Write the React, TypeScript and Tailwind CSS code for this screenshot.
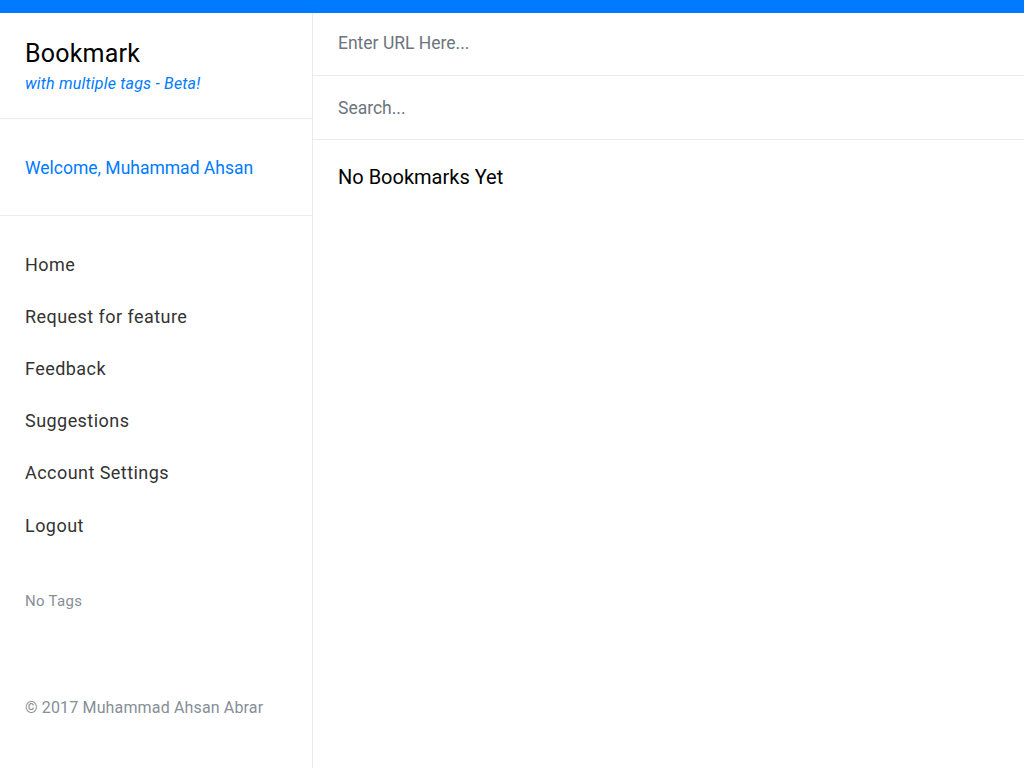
import React from "react";

export default function App() {
  const nav = ["Home", "Request for feature", "Feedback", "Suggestions", "Account Settings", "Logout"];
  return (
    <div className="min-h-[768px] bg-white flex flex-col" style={{ fontFamily: "Roboto, 'Liberation Sans', sans-serif" }}>
      <div className="h-[13px] bg-[#007bff]" />
      <div className="flex flex-1">
        <aside className="w-[313px] border-r border-[#e9ecef] flex flex-col">
          <div className="h-[106px] border-b border-[#e9ecef] pl-[25px] pt-[26px]">
            <div className="text-[25px] leading-[30px] tracking-[0.2px] text-black">Bookmark</div>
            <div className="text-[16px] leading-[20px] italic tracking-[0.2px] text-[#007bff] mt-[5px]">with multiple tags - Beta!</div>
          </div>
          <div className="h-[97px] border-b border-[#e9ecef] pl-[25px] pt-[2px] flex items-center">
            <span className="text-[17.5px] text-[#007bff]">Welcome, Muhammad Ahsan</span>
          </div>
          <nav className="pt-[22px] flex flex-col">
            {nav.map((n) => (
              <div key={n} className="h-[52.2px] pl-[25px] flex items-center text-[18px] text-[#333] tracking-[0.45px]">
                {n}
              </div>
            ))}
          </nav>
          <div className="pl-[25px] mt-[40px] h-[20px] flex items-center text-[15px] tracking-[0.3px] text-[#868e96]">No Tags</div>
          <div className="pl-[25px] mt-[87px] h-[20px] flex items-center text-[16px] tracking-[0.15px] text-[#868e96]">© 2017 Muhammad Ahsan Abrar</div>
        </aside>
        <main className="flex-1 flex flex-col">
          <div className="h-[63px] border-b border-[#e9ecef] pl-[25px] flex items-center pb-[1px]">
            <input className="w-full outline-none text-[17.5px] text-[#495057] placeholder:text-[#6c757d] bg-transparent" placeholder="Enter URL Here..." />
          </div>
          <div className="h-[64px] border-b border-[#e9ecef] pl-[25px] pt-[1px] flex items-center">
            <input className="w-full outline-none text-[17.5px] text-[#495057] placeholder:text-[#6c757d] bg-transparent" placeholder="Search..." />
          </div>
          <div className="pl-[25px] pt-[23px] text-[20px] leading-[28px] text-black">No Bookmarks Yet</div>
        </main>
      </div>
    </div>
  );
}
